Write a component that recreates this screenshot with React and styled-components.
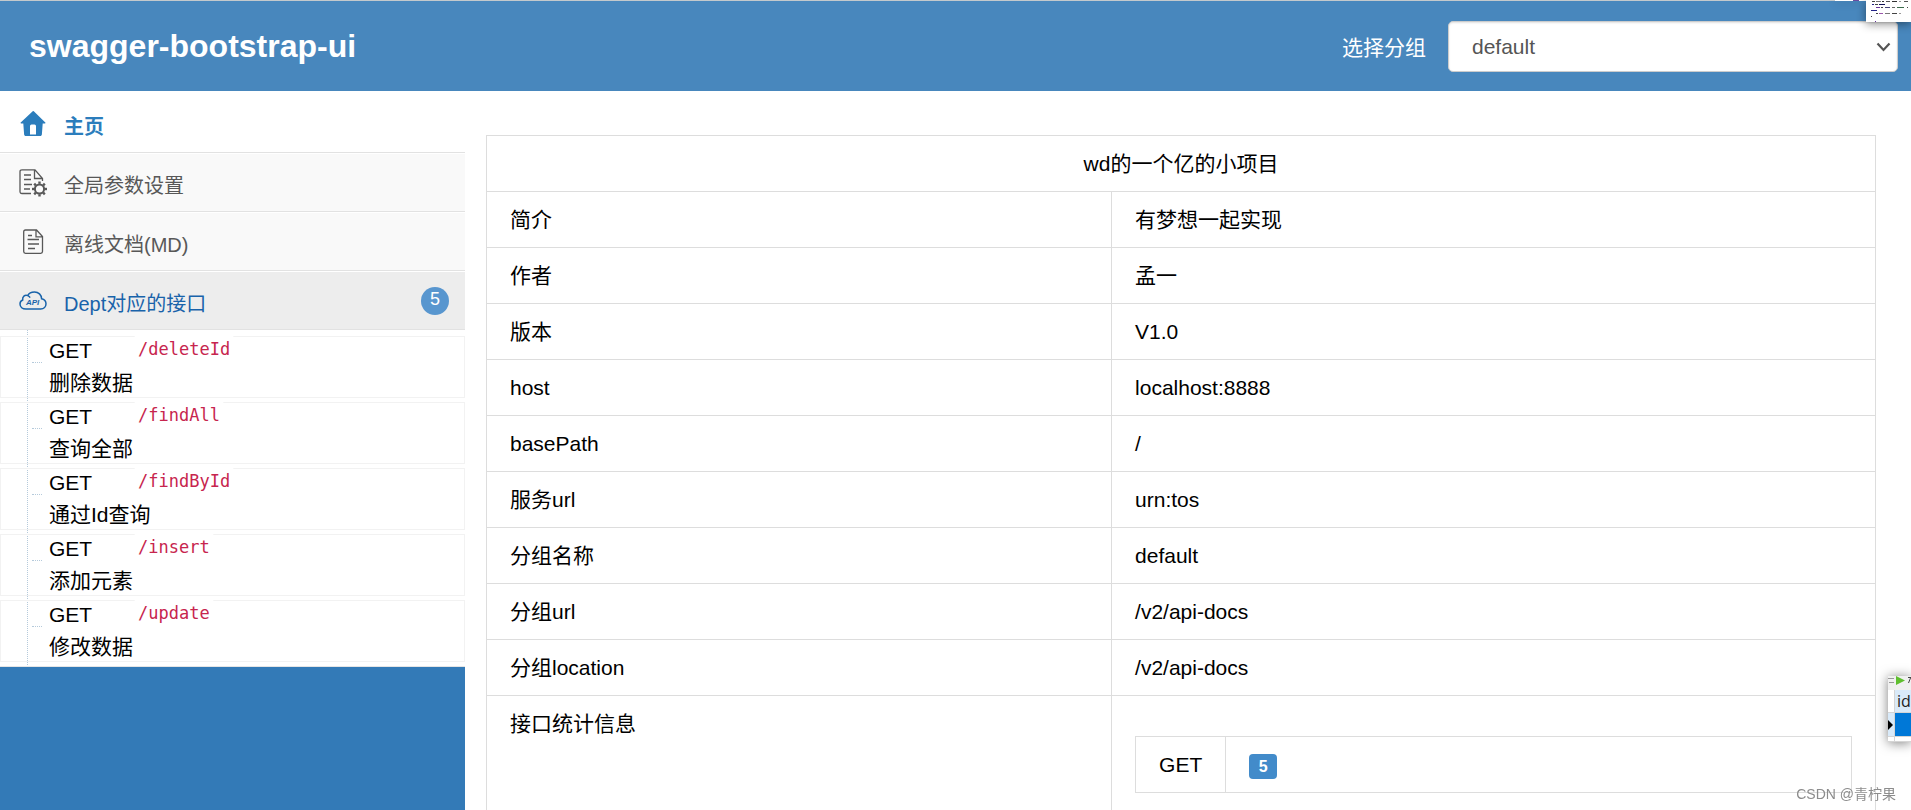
import styled, { createGlobalStyle } from "styled-components";
import { useState } from "react";

const GlobalStyle = createGlobalStyle`
  * {
    box-sizing: border-box;
  }
  body {
    margin: 0;
    overflow: hidden;
    background: #fff;
    color: #000;
    font-family: "Liberation Sans", "Noto Sans CJK SC", sans-serif;
    font-size: 21px;
  }
`;

const Page = styled.div`
  display: flex;
  flex-direction: column;
  height: 100vh;
`;

const Header = styled.header`
  display: flex;
  align-items: center;
  justify-content: space-between;
  height: 91px;
  padding: 0 13px 0 29px;
  border-top: 1px solid #c4c9cc;
  background: #4887bd;
  color: #fff;
`;

const Title = styled.h1`
  margin: 0;
  font-size: 32px;
  line-height: 40px;
`;

const GroupLabel = styled.label`
  display: flex;
  align-items: center;
  gap: 22px;
`;

const SelectBox = styled.div`
  position: relative;
  display: flex;
  width: 450px;

  svg {
    position: absolute;
    right: 7px;
    top: 20px;
    pointer-events: none;
  }
`;

const Select = styled.select`
  width: 100%;
  height: 51px;
  padding: 0 23px;
  border: 1px solid #ccc;
  border-radius: 5px;
  appearance: none;
  background: #fff;
  box-shadow: inset 0 1px 2px rgba(0, 0, 0, 0.12);
  color: #555;
  font-family: inherit;
  font-size: 21px;
`;

const Body = styled.div`
  display: flex;
  flex: 1;
  min-height: 0;
`;

const Sidebar = styled.aside`
  flex: 0 0 465px;
  background: #337ab7;
`;

const Menu = styled.nav`
  background: #fff;
`;

const MenuItem = styled.a`
  display: flex;
  align-items: center;
  height: ${(props) => (props.$home ? "62px" : "59px")};
  padding: ${(props) => (props.$home ? "4px" : "0")} 16px 0 19px;
  border-top: ${(props) => (props.$home ? "0" : "1px solid #fff")};
  border-bottom: 1px solid #e2e2e2;
  background: ${(props) => props.$bg || "#f9f9f9"};
  color: ${(props) => props.$color || "#585858"};
  font-size: 20px;
  font-weight: ${(props) => (props.$home ? "bold" : "normal")};
  text-decoration: none;

  svg {
    flex: none;
    width: 28px;
    height: 28px;
    margin-right: 17px;
  }
`;

const MenuText = styled.span`
  flex: 1;
  padding-top: 4px;
`;

const Count = styled.span`
  width: 28px;
  height: 28px;
  border-radius: 50%;
  background: #5896cf;
  color: #fff;
  font-size: 18px;
  line-height: 24px;
  text-align: center;
`;

const ApiList = styled.ul`
  position: relative;
  display: flex;
  flex-direction: column;
  gap: 4px;
  margin: 0;
  padding: 6px 0 4px;
  border-bottom: 1px solid #e5e5e5;
  background: #fff;
  list-style: none;

  &::before {
    content: "";
    position: absolute;
    left: 27px;
    top: 0;
    bottom: 1px;
    border-left: 1px dotted #b5cadb;
  }
`;

const ApiItem = styled.li`
  position: relative;
  height: 62px;
  padding-left: 48px;
  border: 1px solid #f2f2f2;

  &::before {
    content: "";
    position: absolute;
    left: 31px;
    top: 25px;
    width: 10px;
    border-top: 1px dotted #b5cadb;
  }
`;

const ApiLine = styled.div`
  display: flex;
  align-items: flex-start;
  height: 28px;
  line-height: 28px;
`;

const Method = styled.span`
  width: 85px;
`;

const Path = styled.code`
  position: relative;
  margin-top: -2px;
  padding: 2px 4px;
  border-radius: 4px;
  background: #fff;
  color: #c7254e;
  font-family: "DejaVu Sans Mono", monospace;
  font-size: 17px;
  line-height: 24px;
`;

const ApiName = styled.div`
  line-height: 36px;
`;

const Main = styled.main`
  flex: 1;
  min-width: 0;
  padding: 44px 35px 0 21px;
  overflow: hidden;
`;

const Table = styled.table`
  width: 100%;
  border-collapse: collapse;

  th,
  td {
    padding: 12px 23px;
    border: 1px solid #ddd;
    font-weight: normal;
    line-height: 31px;
    text-align: left;
    vertical-align: top;
  }

  thead th {
    text-align: center;
  }

  tbody > tr > th {
    width: 45%;
  }
`;

const CountTable = styled(Table)`
  margin: 28px 0;

  && th {
    width: 90px;
  }
`;

const Label = styled.span`
  display: inline-block;
  width: 28px;
  border-radius: 4px;
  background: #428bca;
  color: #fff;
  font-size: 16px;
  font-weight: bold;
  line-height: 25px;
  text-align: center;
  vertical-align: middle;
`;

/* windows that lie over the page at its right edge */
const EditorWindow = styled.div`
  position: fixed;
  top: 0;
  right: 0;
  width: 45px;
  height: 22px;
  background: #fff;
  box-shadow: 0 2px 10px rgba(0, 0, 0, 0.45);

  svg {
    display: block;
  }
`;

const EditorEdge = styled.div`
  position: fixed;
  top: 0;
  right: 45px;
  width: 31px;
  height: 1px;
  background: linear-gradient(to right, #fff 18px, #6a4ca0 18px 24px, #fff 24px);
  box-shadow: 0 1px 8px rgba(0, 0, 0, 0.4);
`;

const DataWindow = styled.div`
  position: fixed;
  right: 0;
  top: 676px;
  width: 23px;
  overflow: hidden;
  background: #fff;
`;

const DataShadow = styled.div`
  position: fixed;
  right: 0;
  top: 676px;
  width: 23px;
  height: 66px;
  box-shadow: 0 1px 12px rgba(0, 0, 0, 0.5);
`;

const DataTools = styled.div`
  height: 14px;
  background: #f0f0f0;

  svg {
    display: block;
  }
`;

const DataRow = styled.div`
  display: grid;
  grid-template-columns: 6px 1fr;
  gap: 1px;
  height: ${(props) => props.$height};
  border-bottom: 1px solid #d5d5d5;
  background: #d5d5d5;
`;

const DataCell = styled.div`
  display: flex;
  align-items: center;
  padding-left: ${(props) => (props.$text ? "2px" : "0")};
  background: ${(props) => props.$bg || "#fff"};
  color: #222;
  font-family: "Open Sans", sans-serif;
  font-size: 16px;
  line-height: 20px;
`;

const Watermark = styled.div`
  position: fixed;
  right: 15px;
  bottom: 4px;
  color: #8c8c8c;
  font-size: 14px;
  line-height: 24px;
`;

const apis = [
  { path: "/deleteId", name: "删除数据" },
  { path: "/findAll", name: "查询全部" },
  { path: "/findById", name: "通过Id查询" },
  { path: "/insert", name: "添加元素" },
  { path: "/update", name: "修改数据" },
];

const infos = [
  ["简介", "有梦想一起实现"],
  ["作者", "孟一"],
  ["版本", "V1.0"],
  ["host", "localhost:8888"],
  ["basePath", "/"],
  ["服务url", "urn:tos"],
  ["分组名称", "default"],
  ["分组url", "/v2/api-docs"],
  ["分组location", "/v2/api-docs"],
];

// [x, y, width, colour]
const codeMarks = [
  [6, 1, 3, "#444"], [10, 1, 5, "#777"], [16, 1, 2, "#333"], [20, 1, 4, "#555"], [26, 1, 5, "#333"], [33, 1, 2, "#999"], [38, 1, 4, "#555"],
  [6, 4, 2, "#228"], [9, 4, 3, "#444"], [13, 4, 6, "#115"],
  [10, 7, 4, "#639"], [15, 7, 2, "#444"], [19, 7, 5, "#447"], [26, 7, 3, "#666"], [31, 7, 7, "#3a6b4a"], [41, 7, 1, "#444"],
  [5, 10, 6, "#228"],
  [10, 13, 2, "#444"], [13, 13, 4, "#95a"], [19, 13, 5, "#777"], [26, 13, 5, "#444"], [33, 13, 2, "#999"],
  [5, 16, 1, "#444"], [9, 21, 1, "#639"],
];

const HomeIcon = () => (
  <svg viewBox="0 0 28 28" fill="currentColor" aria-hidden="true">
    <path
      fillRule="evenodd"
      d="M14 1 1.7 12.6c-.4.5-.2.9.4.9h2.2l.8 10.7c.1 1.2.7 1.8 1.8 1.8h14.2c1.1 0 1.7-.6 1.8-1.8l.8-10.7h2.2c.6 0 .8-.4.4-.9L14.8 1.3Q14.400.8 14 1zM11 16q0-1.500 1.500-1.500h3q1.500 0 1.500 1.500v8.500h-6z"
    />
  </svg>
);

const teeth = [0, 45, 90, 135, 180, 225, 270, 315];

const SettingsIcon = () => (
  <svg viewBox="0 0 28 28" fill="none" stroke="currentColor" aria-hidden="true">
    <path d="M12 24.500H3Q1 24.500 1 22.500V2.500Q1 .8 3 .8h13L23.500 9.500V12M15.500 1v8.500h8" strokeWidth="1.300" />
    <path d="M5 6h7M5 10.500h7M5 15.500h8M5 20h6" strokeWidth="1.400" />
    <circle cx="20.500" cy="20" r="4.600" strokeWidth="2" />
    {teeth.map((deg) => (
      <path key={deg} d="M20.500 14.800v-2.300" strokeWidth="2.400" transform={`rotate(${deg} 20.5 20)`} />
    ))}
  </svg>
);

const DocIcon = () => (
  <svg viewBox="0 0 28 28" fill="none" stroke="currentColor" aria-hidden="true">
    <path d="M6.500 2h11L23.500 8.500v15q0 1.800-1.800 1.800H6.500q-1.800 0-1.800-1.800V3.800Q4.700 2 6.500 2zM17 2v6.800h6.500" strokeWidth="1.300" />
    <path d="M9 7.500h4M8.500 11.500H20M9 16h11M9 20.500h7" strokeWidth="1.300" />
  </svg>
);

const CloudIcon = () => (
  <svg viewBox="0 0 28 28" fill="none" stroke="currentColor" aria-hidden="true">
    <path
      d="M7 22C3.500 22 1 20 1 17c0-2 1-3.400 2.700-4-.5-3.500 2-5.300 5-4.400C10 6 12.500 5 15.500 5c4 0 7 2.800 7.100 6.800 2.900.7 4.400 2.600 4.400 5 0 3-2.200 5.200-5.300 5.200zM8.700 8.600c1.200.4 2 1.100 2.400 2"
      strokeWidth="1.500"
    />
    <text x="7" y="18" fill="currentColor" stroke="none" fontSize="8" fontWeight="bold" fontStyle="italic">
      API
    </text>
  </svg>
);

const App = () => {
  const [group, setGroup] = useState("default");

  return (
    <Page>
      <GlobalStyle />
      <Header>
        <Title>swagger-bootstrap-ui</Title>
        <GroupLabel>
          选择分组
          <SelectBox>
            <Select value={group} onChange={(e) => setGroup(e.target.value)}>
              <option value="default">default</option>
            </Select>
            <svg width="15" height="12" viewBox="0 0 15 12" fill="none" stroke="#555" strokeWidth="2.200" aria-hidden="true">
              <path d="M1.500 2.500 7.500 9l6-6.500" />
            </svg>
          </SelectBox>
        </GroupLabel>
      </Header>

      <Body>
        <Sidebar>
          <Menu>
            <MenuItem href="#home" $home $bg="#fff" $color="#2b7dbc">
              <HomeIcon />
              <MenuText>主页</MenuText>
            </MenuItem>
            <MenuItem href="#settings">
              <SettingsIcon />
              <MenuText>全局参数设置</MenuText>
            </MenuItem>
            <MenuItem href="#markdown">
              <DocIcon />
              <MenuText>离线文档(MD)</MenuText>
            </MenuItem>
            <MenuItem href="#dept" $bg="#ededed" $color="#1963aa">
              <CloudIcon />
              <MenuText>Dept对应的接口</MenuText>
              <Count>{apis.length}</Count>
            </MenuItem>
          </Menu>
          <ApiList>
            {apis.map((api) => (
              <ApiItem key={api.path}>
                <ApiLine>
                  <Method>GET</Method>
                  <Path>{api.path}</Path>
                </ApiLine>
                <ApiName>{api.name}</ApiName>
              </ApiItem>
            ))}
          </ApiList>
        </Sidebar>

        <Main>
          <Table>
            <thead>
              <tr>
                <th colSpan={2}>wd的一个亿的小项目</th>
              </tr>
            </thead>
            <tbody>
              {infos.map(([name, value]) => (
                <tr key={name}>
                  <th scope="row">{name}</th>
                  <td>{value}</td>
                </tr>
              ))}
              <tr>
                <th scope="row">接口统计信息</th>
                <td>
                  <CountTable>
                    <tbody>
                      <tr>
                        <th scope="row">GET</th>
                        <td>
                          <Label>{apis.length}</Label>
                        </td>
                      </tr>
                    </tbody>
                  </CountTable>
                </td>
              </tr>
            </tbody>
          </Table>
        </Main>
      </Body>

      <EditorEdge />
      <EditorWindow>
        <svg width="45" height="22" viewBox="0 0 45 22" aria-hidden="true">
          {codeMarks.map(([x, y, width, color]) => (
            <rect key={`${x}-${y}`} x={x} y={y} width={width} height="1" fill={color} />
          ))}
        </svg>
      </EditorWindow>

      <DataShadow />
      <DataWindow>
        <DataTools>
          <svg width="23" height="14" viewBox="0 0 23 14" aria-hidden="true">
            <path d="M0 2.500h6M1 6.500h5" stroke="#999" />
            <path d="M8 0v9l9-4.500z" fill="#5fbf2f" />
            <path d="M20 1.500h3M22.500 2l-2 5" stroke="#444" />
          </svg>
        </DataTools>
        <DataRow $height="23px">
          <DataCell />
          <DataCell $text $bg="#d9eaf9">id</DataCell>
        </DataRow>
        <DataRow $height="24px">
          <DataCell $bg="#d9eaf9">
            <svg width="5" height="10" viewBox="0 0 5 10" aria-hidden="true">
              <path d="M0 0v10l5-5z" />
            </svg>
          </DataCell>
          <DataCell $bg="#0078d7" />
        </DataRow>
        <DataRow $height="5px">
          <DataCell />
          <DataCell />
        </DataRow>
      </DataWindow>

      <Watermark>CSDN @青柠果</Watermark>
    </Page>
  );
};

export default App;
